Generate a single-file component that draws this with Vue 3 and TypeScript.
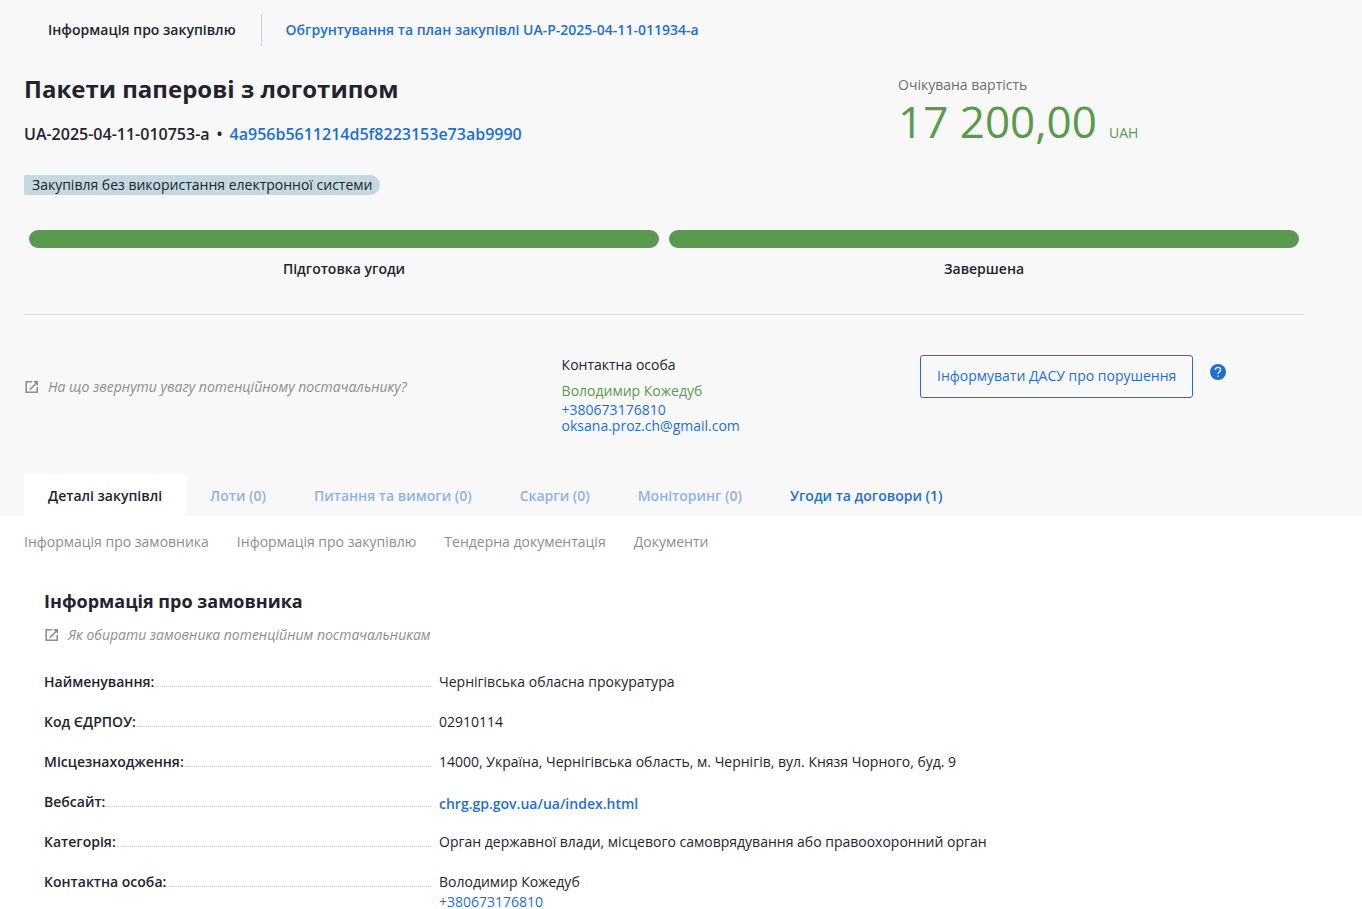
<script setup lang="ts">
interface Tab {
  label: string
  state: 'active' | 'disabled' | 'enabled'
}

interface Detail {
  label: string
  value?: string
  site?: string
  phone?: string
}

const tabs: Tab[] = [
  { label: 'Деталі закупівлі', state: 'active' },
  { label: 'Лоти (0)', state: 'disabled' },
  { label: 'Питання та вимоги (0)', state: 'disabled' },
  { label: 'Скарги (0)', state: 'disabled' },
  { label: 'Моніторинг (0)', state: 'disabled' },
  { label: 'Угоди та договори (1)', state: 'enabled' },
]

const stages: string[] = ['Підготовка угоди', 'Завершена']

const sections: string[] = [
  'Інформація про замовника',
  'Інформація про закупівлю',
  'Тендерна документація',
  'Документи',
]

const details: Detail[] = [
  { label: 'Найменування:', value: 'Чернігівська обласна прокуратура' },
  { label: 'Код ЄДРПОУ:', value: '02910114' },
  { label: 'Місцезнаходження:', value: '14000, Україна, Чернігівська область, м. Чернігів, вул. Князя Чорного, буд. 9' },
  { label: 'Вебсайт:', site: 'chrg.gp.gov.ua/ua/index.html' },
  { label: 'Категорія:', value: 'Орган державної влади, місцевого самоврядування або правоохоронний орган' },
  { label: 'Контактна особа:', value: 'Володимир Кожедуб', phone: '+380673176810' },
]
</script>

<template>
  <div class="page">
    <header class="head">
      <div class="container">
        <nav class="topnav">
          <span class="topnav-item current">Інформація про закупівлю</span>
          <a class="topnav-item" href="#plan">Обгрунтування та план закупівлі UA-P-2025-04-11-011934-a</a>
        </nav>

        <div class="summary">
          <div>
            <h1>Пакети паперові з логотипом</h1>
            <p class="ids">
              <span>UA-2025-04-11-010753-a</span>
              <span>•</span>
              <a href="#id">4a956b5611214d5f8223153e73ab9990</a>
            </p>
            <span class="tag">Закупівля без використання електронної системи</span>
          </div>
          <div class="value">
            <div class="value-label">Очікувана вартість</div>
            <div class="value-sum">
              <span class="amount">17 200,00</span>
              <span>UAH</span>
            </div>
          </div>
        </div>

        <ol class="stages">
          <li v-for="stage in stages" :key="stage">
            <div class="bar"></div>
            {{ stage }}
          </li>
        </ol>

        <div class="contacts">
          <a class="hint" href="#supplier">
            <svg viewBox="0 0 16 16" width="16" height="16" aria-hidden="true">
              <path class="frame" d="M8 2.8H2.2V13.2H13.2V8" />
              <path d="M9 2H14V7L12.3 5.3L6.4 11.2L5.3 10.1L11.2 4.2Z" />
            </svg>
            <span>На що звернути увагу потенційному постачальнику?</span>
          </a>
          <div class="person">
            <div class="person-title">Контактна особа</div>
            <div class="person-name">Володимир Кожедуб</div>
            <a href="tel:+380673176810">+380673176810</a>
            <a href="mailto:oksana.proz.ch@gmail.com">oksana.proz.ch@gmail.com</a>
          </div>
          <div class="report">
            <button type="button" class="report-button">Інформувати ДАСУ про порушення</button>
            <button type="button" class="help" aria-label="Довідка">
              <svg viewBox="0 0 16 16" width="16" height="16" aria-hidden="true">
                <circle cx="8" cy="8" r="8" />
                <path d="M5.4 6C5.4 4.2 6.5 3.3 8 3.3S10.6 4.3 10.6 5.8C10.6 7.6 8 7.8 8 10M8 11.4V12.8" />
              </svg>
            </button>
          </div>
        </div>

        <div class="tabs" role="tablist">
          <button
            v-for="tab in tabs"
            :key="tab.label"
            type="button"
            role="tab"
            :class="['tab', tab.state]"
            :aria-selected="tab.state === 'active'"
            :disabled="tab.state === 'disabled'"
          >{{ tab.label }}</button>
        </div>
      </div>
    </header>

    <main class="container">
      <nav class="sections">
        <a v-for="section in sections" :key="section" href="#section">{{ section }}</a>
      </nav>

      <section class="buyer">
        <h2>Інформація про замовника</h2>
        <a class="hint" href="#buyer">
          <svg viewBox="0 0 16 16" width="16" height="16" aria-hidden="true">
            <path class="frame" d="M8 2.8H2.2V13.2H13.2V8" />
            <path d="M9 2H14V7L12.3 5.3L6.4 11.2L5.3 10.1L11.2 4.2Z" />
          </svg>
          <span>Як обирати замовника потенційним постачальникам</span>
        </a>
        <table>
          <tbody>
            <tr v-for="row in details" :key="row.label">
              <th scope="row"><div class="leader">{{ row.label }}</div></th>
              <td>
                <template v-if="row.value">{{ row.value }}</template>
                <a v-if="row.site" class="site" href="#site">{{ row.site }}</a>
                <a v-if="row.phone" class="phone" :href="'tel:' + row.phone">{{ row.phone }}</a>
              </td>
            </tr>
          </tbody>
        </table>
      </section>
    </main>
  </div>
</template>

<style>
body {
  margin: 0;
  background: #fff;
}
</style>

<style scoped>
.page {
  font: 14px/20px "Open Sans", "Noto Sans", sans-serif;
  color: #23232f;
}

.page *,
.page *::before {
  box-sizing: border-box;
}

a {
  color: #1f6fd0;
  text-decoration: none;
}

button {
  font: inherit;
  cursor: pointer;
}

.head {
  background: #f8f8f8;
}

.container {
  max-width: 1280px;
  margin: 0 24px;
}

.topnav {
  display: flex;
  padding-top: 14px;
}

.topnav-item {
  padding: 6px 24px;
  font-weight: 600;
}

.topnav-item.current {
  padding-right: 25px;
  border-right: 1px solid #c3d8df;
}

.summary {
  display: grid;
  grid-template-columns: 874fr 406fr;
  padding-top: 27px;
}

h1 {
  margin: 0;
  font-size: 24px;
  line-height: 32px;
  font-weight: 700;
}

.ids {
  display: flex;
  gap: 7px;
  margin: 17px 0 29px;
  font-size: 16px;
  line-height: 24px;
  font-weight: 600;
}

.tag {
  display: inline-block;
  padding: 0 8px;
  border-radius: 2px 10px 10px 2px;
  background: #c3d8df;
}

.value-label {
  padding-top: 2px;
  color: #6e6e6e;
}

.value-sum {
  display: flex;
  align-items: baseline;
  gap: 12px;
  color: #5a9a4e;
}

.amount {
  font-size: 44px;
  line-height: 52px;
}

.stages {
  display: grid;
  grid-template-columns: 1fr 1fr;
  margin: 0;
  padding: 35px 0;
  border-bottom: 1px solid #d8d9dd;
  list-style: none;
  font-weight: 600;
  text-align: center;
}

.bar {
  height: 18px;
  margin: 0 5px 11px;
  border-radius: 9px;
  background: #5a9a4e;
}

.contacts {
  display: grid;
  grid-template-columns: 42fr 28fr 30fr;
  padding: 40px 0;
}

.hint {
  display: flex;
  align-items: center;
  align-self: start;
  gap: 8px;
  color: #8e8e8e;
  font-style: italic;
}

.contacts .hint {
  margin-top: 22px;
}

.hint svg {
  flex: none;
  fill: currentColor;
}

.hint .frame {
  fill: none;
  stroke: currentColor;
  stroke-width: 1.6;
}

.person a {
  display: block;
  width: fit-content;
  line-height: 16px;
}

.person-name {
  margin: 6px 0 1px;
  color: #5a9a4e;
}

.report {
  display: flex;
  align-items: flex-start;
  gap: 17px;
}

.report-button {
  height: 43px;
  padding: 0 16px 1px;
  border: 1px solid #1f6fd0;
  border-radius: 3px;
  background: transparent;
  color: #1f6fd0;
}

.help {
  display: flex;
  margin-top: 9px;
  padding: 0;
  border: 0;
  background: none;
}

.help circle {
  fill: #1f6fd0;
}

.help path {
  fill: none;
  stroke: #f8f8f8;
  stroke-width: 1.3;
}

.tabs {
  display: flex;
}

.tab {
  padding: 12px 24px 10px;
  border: 0;
  background: transparent;
  color: #1f6fd0;
  font-weight: 600;
}

.tab.active {
  background: #fff;
  color: #23232f;
}

.tab.disabled {
  opacity: 0.5;
  cursor: default;
}

.sections {
  display: flex;
  gap: 28px;
  padding-top: 16px;
}

.sections a {
  color: #8e8e8e;
}

.buyer {
  padding: 37px 20px 0;
}

h2 {
  margin: 0 0 12px;
  font-size: 18px;
  line-height: 24px;
  font-weight: 700;
}

table {
  width: 100%;
  margin-top: 27px;
  border-collapse: collapse;
}

th,
td {
  padding: 0 0 20px;
  text-align: left;
  vertical-align: top;
  font-weight: 400;
}

th {
  width: 395px;
  padding-right: 8px;
  font-weight: 600;
}

tr:last-child > * {
  padding-bottom: 0;
}

.leader {
  display: flex;
}

.leader::after {
  content: "";
  flex: 1;
  height: 14px;
  border-bottom: 1px dotted #c8c8d0;
}

.site {
  display: block;
  width: fit-content;
  padding-top: 2px;
  margin-bottom: -2px;
  font-weight: 600;
}

.phone {
  display: block;
  width: fit-content;
}
</style>
